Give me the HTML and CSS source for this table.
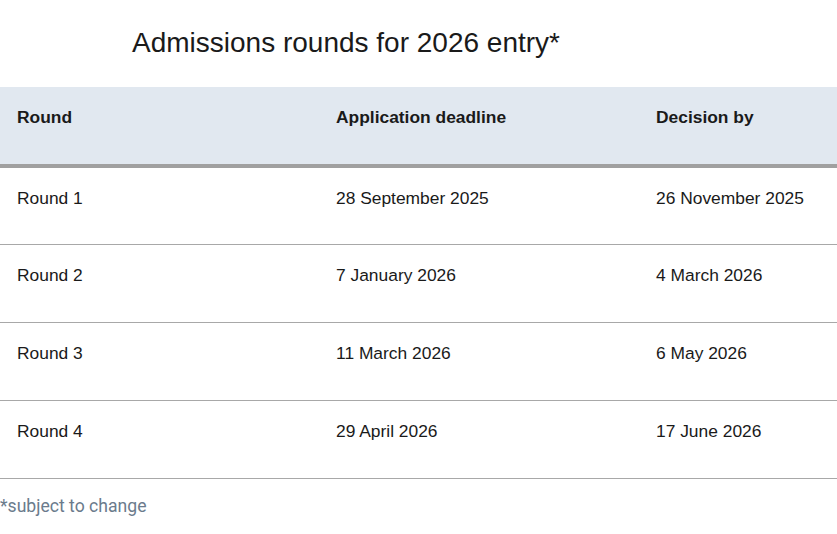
FILE: index.html
```html
<!DOCTYPE html>
<html>
<head>
<meta charset="utf-8">
<link rel="stylesheet" href="styles.css">
</head>
<body>
<h2 class="title">Admissions rounds for 2026 entry*</h2>
<table class="rounds">
  <thead>
    <tr><th>Round</th><th>Application deadline</th><th>Decision by</th></tr>
  </thead>
  <tbody>
    <tr><td>Round 1</td><td>28 September 2025</td><td>26 November 2025</td></tr>
    <tr><td>Round 2</td><td>7 January 2026</td><td>4 March 2026</td></tr>
    <tr><td>Round 3</td><td>11 March 2026</td><td>6 May 2026</td></tr>
    <tr><td>Round 4</td><td>29 April 2026</td><td>17 June 2026</td></tr>
  </tbody>
</table>
<p class="note">*subject to change</p>
</body>
</html>
```
FILE: styles.css
```css
html, body { margin: 0; padding: 0; background: #fff; }
body { font-family: "Liberation Sans", Arial, sans-serif; color: #1a1a1a; overflow: hidden; width: 837px; }
.title {
  margin: 0;
  height: 87px;
  box-sizing: border-box;
  padding: 27px 0 0 132px;
  font-size: 28px;
  font-weight: normal;
  line-height: 32px;
  color: #1a1a1a;
}
.rounds { border-collapse: collapse; width: 837px; table-layout: fixed; }
.rounds th:nth-child(1), .rounds td:nth-child(1) { width: 319px; }
.rounds th:nth-child(2), .rounds td:nth-child(2) { width: 320px; }
.rounds th {
  background: #e1e8f0;
  text-align: left;
  font-weight: bold;
  font-size: 17.4px;
  line-height: 20px;
  height: 79px;
  padding: 20px 0 0 17px;
  box-sizing: border-box;
  vertical-align: top;
  border-bottom: 4px solid #a0a0a0;
}
.rounds td {
  font-size: 17.4px;
  line-height: 20px;
  height: 78px;
  padding: 20px 0 0 17px;
  box-sizing: border-box;
  vertical-align: top;
  border-bottom: 1px solid #a8a8a8;
  white-space: nowrap;
}
.note {
  margin: 17px 0 0 0;
  font-family: Roboto, sans-serif;
  font-size: 17.6px;
  line-height: 20px;
  color: #6b7b8c;
}
```
